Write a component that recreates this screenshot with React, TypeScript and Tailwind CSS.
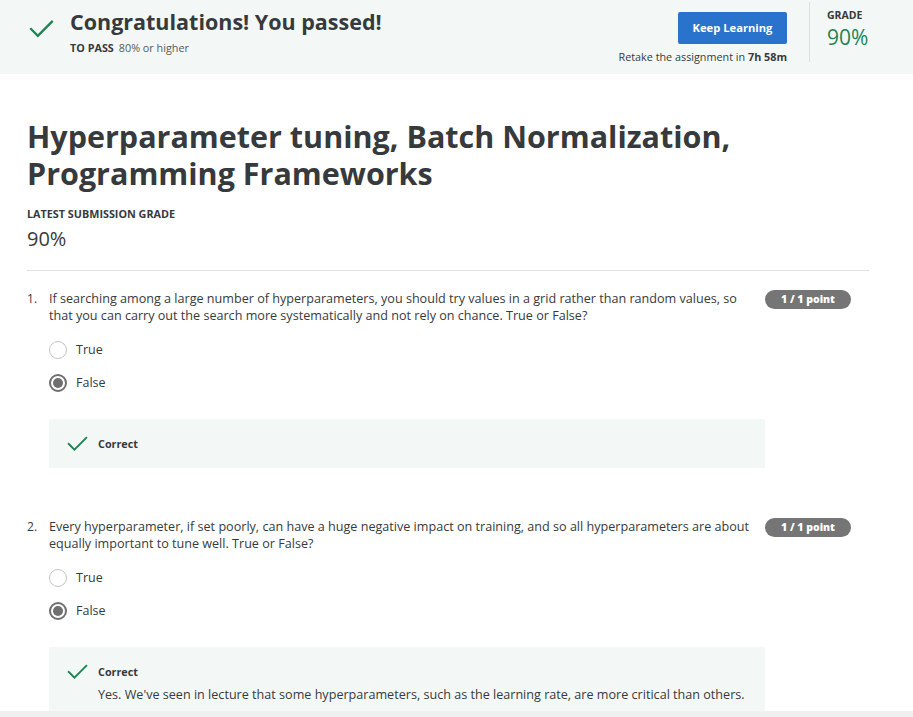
import React from "react";

type Option = { label: string; checked: boolean };

type Question = {
  n: number;
  text: string;
  options: Option[];
  explanation?: string;
};

const questions: Question[] = [
  {
    n: 1,
    text: "If searching among a large number of hyperparameters, you should try values in a grid rather than random values, so that you can carry out the search more systematically and not rely on chance. True or False?",
    options: [
      { label: "True", checked: false },
      { label: "False", checked: true },
    ],
  },
  {
    n: 2,
    text: "Every hyperparameter, if set poorly, can have a huge negative impact on training, and so all hyperparameters are about equally important to tune well. True or False?",
    options: [
      { label: "True", checked: false },
      { label: "False", checked: true },
    ],
    explanation:
      "Yes. We've seen in lecture that some hyperparameters, such as the learning rate, are more critical than others.",
  },
];

const Check = ({ size = 22 }: { size?: number }) => (
  <svg width={size} height={size} viewBox="0 0 24 24" fill="none">
    <path d="M2 12.5l6.5 6.5L22 5.5" stroke="#1f8354" strokeWidth="2.2" strokeLinecap="square" />
  </svg>
);

const Radio = ({ checked }: { checked: boolean }) => (
  <span
    className={
      checked
        ? "flex h-[18px] w-[18px] items-center justify-center rounded-full border-2 border-[#6f6f6f]"
        : "flex h-[18px] w-[18px] items-center justify-center rounded-full border border-[#c4c4c4]"
    }
  >
    {checked && <span className="h-[10px] w-[10px] rounded-full bg-[#6f6f6f]" />}
  </span>
);

const QuestionBlock = ({ q }: { q: Question }) => (
  <div className="mb-[47px]">
    <div className="flex items-start">
      <div className="w-[22px] shrink-0 pt-[3px] text-[12px] leading-[18px] text-[#373a3c]">{q.n}.</div>
      <div className="w-[706px] shrink-0 pt-[3px] text-[12.6px] leading-[17px] text-[#373a3c]">{q.text}</div>
      <div className="ml-[10px] mt-[3px] flex h-[19px] w-[86px] items-center justify-center rounded-full bg-[#757575] text-[10.5px] font-extrabold text-white">
        1 / 1 point
      </div>
    </div>
    <div className="ml-[22px] mt-[17px] flex flex-col gap-[15px]">
      {q.options.map((o) => (
        <label key={o.label} className="flex items-center gap-[9px] text-[12.5px] leading-[18px] text-[#373a3c]">
          <Radio checked={o.checked} />
          {o.label}
        </label>
      ))}
    </div>
    <div className="ml-[22px] mt-[27px] w-[716px] bg-[#f3f8f6] pl-[18px] pr-4 pt-[14px] pb-[14px]">
      <div className="flex items-center gap-[10px]">
        <Check size={21} />
        <span className="text-[10.8px] font-bold text-[#373a3c]">Correct</span>
      </div>
      {q.explanation && (
        <div className="ml-[31px] mt-[4px] text-[12.6px] leading-[18px] text-[#373a3c]">{q.explanation}</div>
      )}
    </div>
  </div>
);

export default function App() {
  return (
    <div
      className="flex h-[717px] w-[913px] flex-col overflow-hidden bg-white"
      style={{ fontFamily: '"Open Sans", "Noto Sans", sans-serif' }}
    >
      <div className="flex-1 overflow-hidden">
        {/* Banner */}
        <div className="flex h-[74px] bg-[#f3f8f6]">
          <div className="flex flex-1 items-start pl-[29px] pt-[8px]">
            <div className="pt-[8px]">
              <Check size={25} />
            </div>
            <div className="ml-[16px]">
              <div className="text-[21.5px] font-bold leading-[28px] text-[#373a3c]">Congratulations! You passed!</div>
              <div className="mt-[4px] text-[10.8px] text-[#373a3c]">
                <span className="font-bold">TO PASS</span>
                <span className="ml-[5px] text-[#595959]">80% or higher</span>
              </div>
            </div>
          </div>
          <div className="flex flex-col items-end pt-[12px]">
            <button className="h-[32px] w-[109px] rounded-[2px] bg-[#2a73cc] text-[11.2px] font-bold text-white">
              Keep Learning
            </button>
            <div className="mt-[5px] text-[10.8px] text-[#373a3c]">
              Retake the assignment in <span className="font-bold">7h 58m</span>
            </div>
          </div>
          <div className="ml-[22px] mt-[2px] h-[60px] w-px bg-[#dedede]" />
          <div className="w-[103px] pl-[17px] pt-[8px]">
            <div className="text-[10.5px] font-bold text-[#373a3c]">GRADE</div>
            <div className="text-[21px] leading-[26px] text-[#1f8354]">90%</div>
          </div>
        </div>

        {/* Content */}
        <div className="px-[27px] pt-[44px]">
          <h1 className="w-[760px] text-[30.5px] font-bold leading-[37px] text-[#373a3c]">
            Hyperparameter tuning, Batch Normalization, Programming Frameworks
          </h1>
          <div className="mt-[14px] text-[10.8px] font-bold text-[#373a3c]">LATEST SUBMISSION GRADE</div>
          <div className="mt-[4px] text-[20px] leading-[26px] text-[#373a3c]">90%</div>
          <div className="mt-[18px] h-px w-[842px] bg-[#e0e0e0]" />
          <div className="pt-[16px]">
            {questions.map((q) => (
              <QuestionBlock key={q.n} q={q} />
            ))}
          </div>
        </div>
      </div>
      <div className="h-[6px] shrink-0 bg-[#f0f0f0]" />
    </div>
  );
}
